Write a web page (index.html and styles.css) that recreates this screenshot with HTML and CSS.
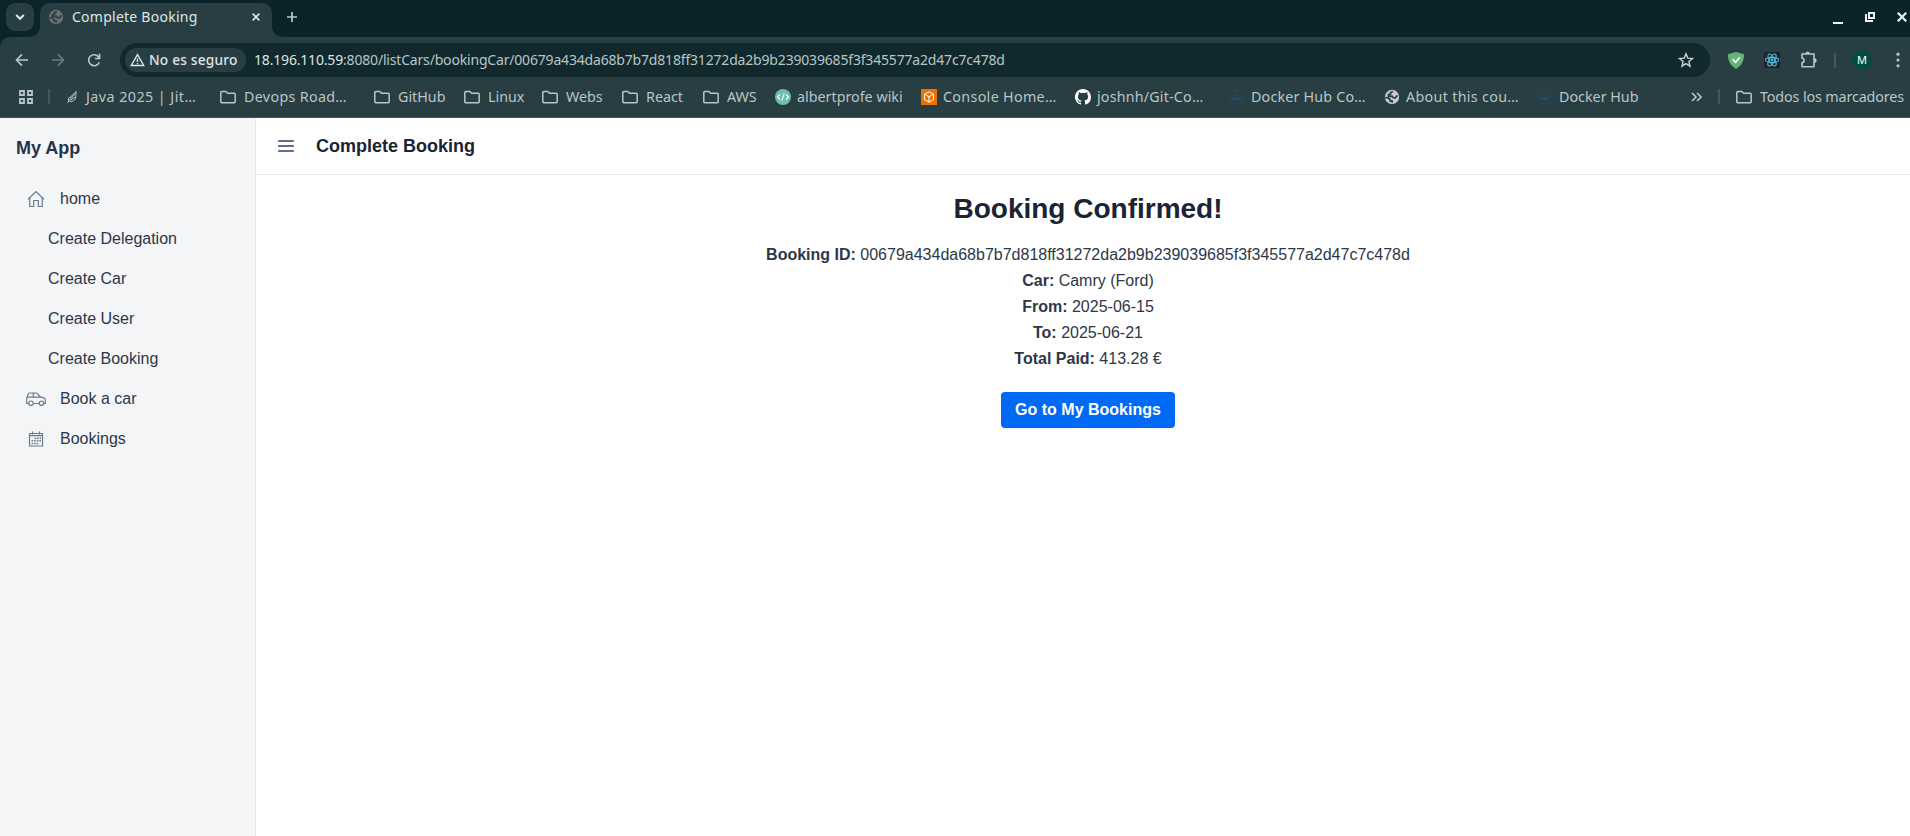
FILE: index.html
```html
<!DOCTYPE html>
<html lang="es">
<head>
<meta charset="utf-8">
<title>Complete Booking</title>
<link rel="stylesheet" href="styles.css">
</head>
<body>
<svg class="defs" width="0" height="0">
  <symbol id="folder" viewBox="0 0 16 16"><path d="M.8 12.800V3.400q0-.9.9-.9h4.100l1.800 1.800h6.700q.9 0 .9.900v7.600q0 .9-.9.900H1.700q-.9 0-.9-.9z" fill="none" stroke="currentColor" stroke-width="1.500"/></symbol>
  <symbol id="globe" viewBox="0 0 16 16"><circle cx="8" cy="8" r="7.200" fill="currentColor"/><path class="land" d="M9 2.500 6.500 3.500v2H4.500v1.800h3.800l1 1.400 2.200.2 1-1.800 1.300-.4M1.200 8.700l3 .3 1.800 1.200v1.600h2l.3 2" fill="none" stroke-width="1.700"/></symbol>
  <symbol id="whale" viewBox="0 0 16 16"><circle cx="8" cy="8" r="7.300" fill="none" stroke="#24496a" stroke-width=".8"/><path d="M3 8h8.200q.2-1.400 1-1.900.8.700.8 1.500l1 .2q-.6 1-1.800 1-1.200 3-4.900 3Q3.400 11.800 3 8zM4.500 6.300h5v1h-5zM6.600 4.500h2.500v1.200H6.600z" fill="#24496a"/></symbol>
</svg>
<div class="tabstrip">
  <div class="tab-search"><svg width="10" height="8" viewBox="0 0 10 8"><path d="M1.200 2 5 5.800 8.800 2" fill="none" stroke="currentColor" stroke-width="2"/></svg></div>
  <div class="tab">
    <svg class="fav" width="16" height="16"><use href="#globe"/></svg>
    <span class="tab-title">Complete Booking</span>
    <svg class="tab-close" width="8" height="8" viewBox="0 0 8 8"><path d="m.6.600 6.800 6.800M7.400.600.600 7.400" stroke="currentColor" stroke-width="1.600"/></svg>
  </div>
  <svg class="new-tab" width="12" height="12" viewBox="0 0 12 12"><path d="M6 1v10M1 6h10" stroke="currentColor" stroke-width="1.700"/></svg>
  <div class="window-controls">
    <svg width="10" height="12" viewBox="0 0 10 12"><path d="M0 9h10" stroke="currentColor" stroke-width="2"/></svg>
    <svg width="10" height="10" viewBox="0 0 10 10"><path d="M4 1h5v5H4zM1 2v7h7" fill="none" stroke="currentColor" stroke-width="2"/></svg>
    <svg width="10" height="10" viewBox="0 0 10 10"><path d="m.8.800 8.400 8.400M9.200.800.800 9.200" stroke="currentColor" stroke-width="2.200"/></svg>
  </div>
</div>
<div class="toolbar">
  <div class="nav">
    <svg width="14" height="14" viewBox="0 0 14 14"><path d="M13 7H1.700M7 1.400 1.500 7 7 12.600" fill="none" stroke="currentColor" stroke-width="1.600"/></svg>
    <svg class="off" width="14" height="14" viewBox="0 0 14 14"><path d="M1 7h11.300M7 1.400 12.500 7 7 12.600" fill="none" stroke="currentColor" stroke-width="1.600"/></svg>
    <svg width="14" height="14" viewBox="0 0 14 14"><path d="M12.300 9.200A5.500 5.500 0 1 1 11.800 4.200L12.500 5.300M12.600.800v4.700H8" fill="none" stroke="currentColor" stroke-width="1.600"/></svg>
  </div>
  <div class="omnibox">
    <div class="security"><svg width="15" height="14" viewBox="0 0 15 14"><path d="M7.500 1.700 1.300 12.500h12.400zM7.500 5.500v3.500M7.500 10v1.300" fill="none" stroke="currentColor" stroke-width="1.400"/></svg><span>No es seguro</span></div>
    <span class="url"><b>18.196.110.59</b>:8080/listCars/bookingCar/00679a434da68b7b7d818ff31272da2b9b239039685f3f345577a2d47c7c478d</span>
    <svg class="star" width="16" height="16" viewBox="0 0 16 16"><path d="m8 1.700 1.800 4.400 4.700.4-3.600 3 1.100 4.700L8 11.700l-4 2.500 1.100-4.700-3.600-3 4.700-.4z" fill="none" stroke="currentColor" stroke-width="1.400"/></svg>
  </div>
  <div class="extensions">
    <svg width="16" height="17" viewBox="0 0 16 17"><path d="M8 0q4 .8 8 2.200Q16.500 12 8 17-.5 12 0 2.200 4 .8 8 0z" fill="#67b279"/><path d="m4.600 7.200 3 3 4.200-5" fill="none" stroke="#fff" stroke-width="1.600"/></svg>
    <svg width="16" height="16" viewBox="0 0 16 16"><path fill="#20232a" d="M0 0h16v16H0z"/><g fill="none" stroke="#52b9dc" stroke-width="1.100"><ellipse cx="8" cy="8" rx="6.600" ry="2.600"/><ellipse cx="8" cy="8" rx="6.600" ry="2.600" transform="rotate(60 8 8)"/><ellipse cx="8" cy="8" rx="6.600" ry="2.600" transform="rotate(120 8 8)"/></g><circle cx="8" cy="8" r="1.400" fill="#52b9dc"/></svg>
    <svg width="18" height="18" viewBox="0 0 18 18"><path d="M2 3h12v12.800H2v-4q2-.3 2-2.400T2 7zM6 3q0-1.700 1.600-1.700T9.200 3M14 7.800q1.800 0 1.800 1.700T14 11.200" fill="none" stroke="currentColor" stroke-width="1.600" stroke-linejoin="round"/></svg>
    <i class="divider"></i>
    <span class="avatar">M</span>
    <svg width="4" height="16" viewBox="0 0 4 16"><g fill="currentColor"><circle cx="2" cy="2.200" r="1.600"/><circle cx="2" cy="8" r="1.600"/><circle cx="2" cy="13.800" r="1.600"/></g></svg>
  </div>
</div>
<div class="bookmarks">
  <svg class="apps" width="16" height="16" viewBox="0 0 16 16"><path d="M2 2h4v4H2zM10 2h4v4h-4zM2 10h4v4H2zM10 10h4v4h-4z" fill="none" stroke="currentColor" stroke-width="1.800"/></svg>
  <i class="divider"></i>
  <div class="links">
    <a class="wide java"><svg width="16" height="16" viewBox="0 0 16 16"><path d="M3.500 14 5 11.500M4.500 11.500Q3.500 8.500 7 7.500L12.200 2.500 11.800 6.500Q12.500 11.500 7 12.500zM5.500 11 11 5M6.500 10.800 11.800 8" fill="none" stroke="currentColor" stroke-width="1"/></svg><span>Java 2025 | Jit…</span></a>
    <a class="dir wide"><svg width="16" height="16"><use href="#folder"/></svg><span>Devops Road…</span></a>
    <a class="dir"><svg width="16" height="16"><use href="#folder"/></svg><span>GitHub</span></a>
    <a class="dir"><svg width="16" height="16"><use href="#folder"/></svg><span>Linux</span></a>
    <a class="dir"><svg width="16" height="16"><use href="#folder"/></svg><span>Webs</span></a>
    <a class="dir"><svg width="16" height="16"><use href="#folder"/></svg><span>React</span></a>
    <a class="dir"><svg width="16" height="16"><use href="#folder"/></svg><span>AWS</span></a>
    <a><svg width="16" height="16" viewBox="0 0 16 16"><circle cx="8" cy="8" r="8" fill="#6dbfa8"/><path d="M5 5.500 2.500 8 5 10.500M11 5.500 13.500 8 11 10.500M9.200 4.500 6.800 11.500" fill="none" stroke="#fff" stroke-width="1.100"/></svg><span>albertprofe wiki</span></a>
    <a class="wide"><svg width="16" height="16" viewBox="0 0 16 16"><path d="M0 0h16v16H0z" fill="#ed7100"/><path d="m8 2.800 4.500 2.400v5.400L8 13.200l-4.500-2.600V5.200zM3.500 5.200 8 7.700l4.500-2.500M8 7.700v5.500" fill="none" stroke="#fff"/></svg><span>Console Home…</span></a>
    <a class="snug"><svg width="16" height="16" viewBox="0 0 16 16"><path fill="#fff" d="M8 0C3.580 0 0 3.580 0 8c0 3.540 2.290 6.530 5.470 7.590.4.070.55-.17.55-.38v-1.490c-2.230.48-2.690-.95-2.690-.95-.36-.92-.89-1.170-.89-1.170-.73-.5.050-.49.050-.49.800.060 1.230.830 1.230.830.720 1.220 1.870.870 2.330.660.070-.52.280-.87.500-1.070-1.780-.2-3.640-.89-3.640-3.950 0-.87.310-1.590.820-2.150-.08-.2-.36-1.020.080-2.120 0 0 .670-.21 2.200.820a7.600 7.600 0 0 1 4 0c1.530-1.040 2.200-.82 2.200-.82.440 1.100.160 1.920.080 2.120.510.560.820 1.270.820 2.150 0 3.070-1.870 3.750-3.650 3.950.290.250.540.730.540 1.480v2.200c0 .210.150.460.550.380A8 8 0 0 0 16 8c0-4.420-3.580-8-8-8z"/></svg><span>joshnh/Git-Co…</span></a>
    <a class="snug"><svg width="16" height="16"><use href="#whale"/></svg><span>Docker Hub Co…</span></a>
    <a class="wide"><svg class="light-globe" width="16" height="16"><use href="#globe"/></svg><span>About this cou…</span></a>
    <a><svg width="16" height="16"><use href="#whale"/></svg><span>Docker Hub</span></a>
  </div>
  <svg class="more" width="11" height="10" viewBox="0 0 11 10"><path d="m1 1 4 4-4 4M6 1l4 4-4 4" fill="none" stroke="currentColor" stroke-width="1.600"/></svg>
  <i class="divider"></i>
  <a class="all dir"><svg width="16" height="16"><use href="#folder"/></svg><span>Todos los marcadores</span></a>
</div>
<div class="app">
  <aside class="sidebar">
    <h1>My App</h1>
    <nav>
      <a><svg width="18" height="18" viewBox="0 0 18 18"><path d="M1 9.300 9 1.500l8 7.800M2.700 8v8.500h4v-6h4.600v6h4V8" fill="none" stroke="currentColor" stroke-width="1.200"/></svg><span>home</span></a>
      <a class="sub">Create Delegation</a>
      <a class="sub">Create Car</a>
      <a class="sub">Create User</a>
      <a class="sub">Create Booking</a>
      <a><svg width="20" height="14" viewBox="0 0 20 14"><path d="M2.700 11.500H.7V6l1.700-4.200Q2.700 1 3.600 1h6.300q.8 0 1.500.6l3.400 3.500 3.200.8q1.300.5 1.300 1.900v3.700H17.500M7.300 11.500h6M.9 5.200h14M7.300 1v4.200" fill="none" stroke="currentColor" stroke-width="1.200"/><g fill="none" stroke="currentColor" stroke-width="1.200"><circle cx="5" cy="11.200" r="2.200"/><circle cx="15.500" cy="11.200" r="2.200"/></g></svg><span>Book a car</span></a>
      <a><svg width="16" height="16" viewBox="0 0 16 16"><path d="M1.500 2.500h13v12.500h-13zM1.500 4.700h13M4.500.5v3M11.500.5v3" fill="none" stroke="currentColor" stroke-width="1.200"/><path d="M6.500 7.300h6.500M3.500 9.800H13M3.500 12.400h6.800" fill="none" stroke="currentColor" stroke-width="1.500" stroke-dasharray="1.600 1"/></svg><span>Bookings</span></a>
    </nav>
  </aside>
  <main>
    <header><svg width="16" height="14" viewBox="0 0 16 14"><path d="M.8 2h14.400M.8 7h14.400M.8 12h14.400" stroke="currentColor" stroke-width="1.900" stroke-linecap="round"/></svg><h2>Complete Booking</h2></header>
    <section class="confirmation">
      <h3>Booking Confirmed!</h3>
      <div class="details">
        <p><b>Booking ID:</b> 00679a434da68b7b7d818ff31272da2b9b239039685f3f345577a2d47c7c478d</p>
        <p><b>Car:</b> Camry (Ford)</p>
        <p><b>From:</b> 2025-06-15</p>
        <p><b>To:</b> 2025-06-21</p>
        <p><b>Total Paid:</b> 413.28 €</p>
      </div>
      <button>Go to My Bookings</button>
    </section>
  </main>
</div>
</body>
</html>
```
FILE: styles.css
```css
* { box-sizing: border-box; margin: 0; padding: 0; }
body { height: 836px; overflow: hidden; display: flex; flex-direction: column; background: #0b2429; font-family: "Noto Sans", sans-serif; }
svg { display: block; flex: none; }
.defs { position: absolute; }

.tabstrip { height: 37px; flex: none; display: flex; align-items: flex-start; padding: 3px 3px 0 6px; color: #dfe6e7; background: #0b2429; }
.tab-search { width: 28px; height: 28px; border-radius: 9px; background: #283e43; display: flex; align-items: center; justify-content: center; }
.tab { position: relative; width: 232px; height: 34px; margin-left: 6px; padding: 0 12px 6px 8px; border-radius: 10px 10px 0 0; background: #283e43; display: flex; align-items: center; }
.tab::before, .tab::after { content: ""; position: absolute; bottom: 0; width: 10px; height: 10px; }
.tab::before { left: -10px; background: radial-gradient(circle at 0 0, transparent 9.5px, #283e43 10px); }
.tab::after { right: -10px; background: radial-gradient(circle at 100% 0, transparent 9.5px, #283e43 10px); }
.fav { color: #6f7073; --land: #283e43; }
.light-globe { color: #c7cacf; --land: #283e43; }
.land { stroke: var(--land); }
.tab-title { margin-left: 8px; font-size: 14px; letter-spacing: .25px; line-height: 26px; padding-bottom: 1px; white-space: nowrap; }
.tab-close { margin-left: auto; }
.new-tab { margin: 8px 0 0 14px; color: #b9c9cb; }
.window-controls { margin: 9px 0 0 auto; display: flex; gap: 22px; color: #eef2f2; }
.window-controls svg:first-child { margin-top: 2px; }

.toolbar { height: 44px; flex: none; display: flex; align-items: center; padding-top: 2px; background: #283e43; border-top-left-radius: 10px; color: #b4cacd; }
.nav { width: 120px; padding-left: 15px; display: flex; gap: 22px; }
.nav .off { color: #667d81; }
.omnibox { width: 1590px; height: 34px; border-radius: 17px; background: #11292d; display: flex; align-items: center; padding: 0 16px 0 5px; color: #c9d2d3; }
.security { width: 121px; height: 24px; border-radius: 12px; background: #283e43; padding-left: 5px; display: flex; align-items: center; gap: 4px; color: #e0e4e5; font-size: 13.7px; font-weight: 500; letter-spacing: .2px; white-space: nowrap; }
.security span, .url { padding-bottom: 1px; }
.url { margin-left: 8px; font-size: 14px; letter-spacing: -.18px; color: #b8c5c7; white-space: nowrap; }
.url b { font-weight: 400; color: #dce4e5; }
.star { margin-left: auto; }
.extensions { display: flex; align-items: center; margin-left: 18px; }
.extensions svg:nth-child(2) { margin-left: 20px; }
.extensions svg:nth-child(3) { margin-left: 20px; }
.divider { width: 2px; height: 15px; background: #42585d; flex: none; }
.extensions .divider { margin-left: 16px; }
.avatar { width: 20px; height: 20px; margin: 0 24px 0 16px; border-radius: 50%; background: #004d40; color: #fff; font-size: 11px; line-height: 20px; text-align: center; }

.bookmarks { height: 37px; flex: none; display: flex; align-items: center; padding-bottom: 5px; background: #283e43; border-bottom: 1px solid #45565a; color: #bac5c7; font-size: 14.3px; }
.apps { margin: 0 14px 0 18px; }
.links { width: 1627px; flex: none; margin-left: 14px; display: grid; grid-template-columns: 156px 154px 90px 78px 80px 81px 72px 146px 154px 154px 155px 153px 120px; }
.bookmarks a { display: flex; align-items: center; gap: 6px; white-space: nowrap; }
.bookmarks a.dir { gap: 8px; }
.bookmarks a.wide { letter-spacing: .32px; }
.bookmarks a.java { letter-spacing: .45px; }
.bookmarks a.snug { letter-spacing: .18px; }
.more { flex: none; }
.bookmarks .more + .divider { margin-left: 16px; }
.bookmarks .all { margin-left: 16px; letter-spacing: -.12px; }

.app { flex: 1; display: flex; font-family: "Liberation Sans", Arial, sans-serif; font-size: 16px; background: #fff; color: #2d3748; }
.sidebar { width: 256px; background: #f3f5f7; border-right: 1px solid #e4e7eb; padding: 20px 16px; }
.sidebar h1 { font-size: 18px; line-height: 20px; color: #26344b; }
.sidebar nav { padding-top: 21px; }
.sidebar nav a { display: flex; align-items: center; height: 40px; gap: 4px; color: #2d3748; }
.sidebar nav a svg { width: 40px; color: #6b7a8f; }
.sidebar nav a.sub { padding-left: 32px; }
main { flex: 1; }
header { height: 57px; border-bottom: 1px solid #e4e7eb; display: flex; align-items: center; padding-left: 22px; gap: 22px; color: #5f6f84; }
header h2 { font-size: 18px; color: #1a2433; }
.confirmation { padding: 16px 0 0 10px; text-align: center; display: flex; flex-direction: column; align-items: center; }
h3 { font-size: 28px; line-height: 35px; color: #1a2433; }
.details { margin-top: 16px; line-height: 26px; }
button { margin-top: 20px; width: 174px; height: 36px; border: 0; border-radius: 4px; background: #006af5; color: #fff; font: bold 16px "Liberation Sans", Arial, sans-serif; white-space: nowrap; }
```
